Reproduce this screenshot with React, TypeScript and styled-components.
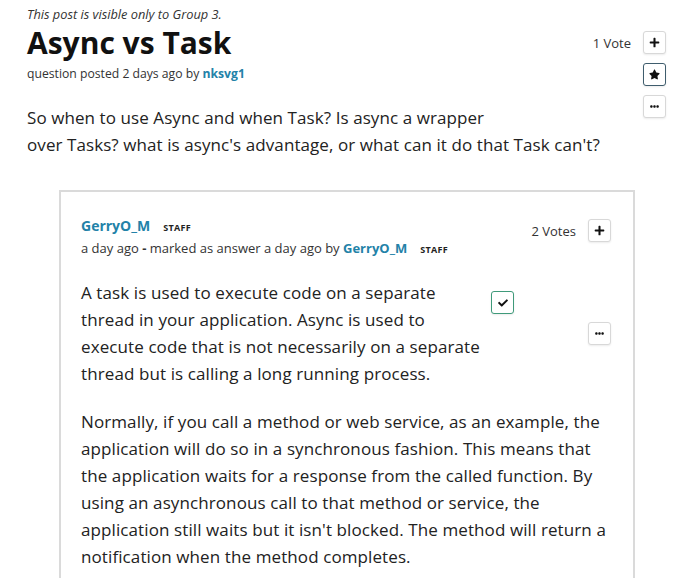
import React from "react";
import styled, { createGlobalStyle } from "styled-components";
import { FaPlus, FaStar, FaEllipsisH, FaCheck } from "react-icons/fa";

const Global = createGlobalStyle`
  html, body { margin: 0; padding: 0; background: #fff; }
  body { font-family: "Open Sans", "Noto Sans", sans-serif; color: #222; }
`;

const Page = styled.div`
  padding: 5px 17px 0 27px;
`;

const Top = styled.header`
  display: flow-root;
`;

const Notice = styled.div`
  font-size: 12.8px;
  line-height: 18px;
  font-style: italic;
  color: #333;
`;

const Title = styled.h1`
  margin: 3px 0 0;
  font-size: 30px;
  line-height: 34px;
  font-weight: 700;
  color: #111;
`;

const Meta = styled.div<{ $top?: number; $size?: number }>`
  font-size: ${(p) => p.$size ?? 13}px;
  line-height: 20px;
  color: #333;
  margin-top: ${(p) => p.$top ?? 0}px;
`;

const Link = styled.span<{ $size?: number }>`
  color: #2382a8;
  font-weight: 700;
  font-size: ${(p) => (p.$size ? `${p.$size}px` : "inherit")};
`;

const Staff = styled.span`
  font-size: 9px;
  font-weight: 700;
  letter-spacing: 0.3px;
  color: #222;
  margin-left: 13px;
`;

const Question = styled.p`
  margin: 20px 0 0;
  font-size: 17px;
  line-height: 27px;
  color: #222;
  letter-spacing: 0.08px;
`;

const Actions = styled.div`
  float: right;
  display: flex;
  flex-direction: column;
  align-items: flex-end;
  gap: 9px;
  padding-top: 26px;
  margin-left: 12px;
`;

const VoteRow = styled.div`
  display: flex;
  align-items: center;
  gap: 12px;
`;

const VoteLabel = styled.span`
  font-size: 13px;
  color: #333;
`;

const IconButton = styled.button<{ $tone?: "plain" | "dark" | "green" }>`
  width: 23px;
  height: 23px;
  padding: 0;
  display: flex;
  align-items: center;
  justify-content: center;
  background: #fff;
  border-radius: 3px;
  border: 1px solid
    ${(p) =>
      p.$tone === "dark" ? "#3f5d6d" : p.$tone === "green" ? "#3f9a7a" : "#d8d8d8"};
  box-shadow: 0 1px 2px rgba(0, 0, 0, 0.08);
  color: #111;
  font-size: 11px;
  cursor: pointer;
`;

const Card = styled.section`
  margin: 32px 31px 0 32px;
  border: 2px solid #dadada;
  border-bottom: none;
  padding: 24px 22px 30px 20px;
`;

const CardHead = styled.div`
  display: flex;
  justify-content: space-between;
  align-items: flex-start;
`;

const AnswerVotes = styled(VoteRow)`
  margin-top: 3px;
`;

const CardBody = styled.div`
  display: flex;
  margin-top: 19px;
`;

const FirstPara = styled.p`
  margin: 0;
  width: 404px;
  font-size: 17px;
  line-height: 27px;
  letter-spacing: 0.1px;
  color: #222;
`;

const CheckSlot = styled.div`
  padding-top: 12px;
  margin-left: 6px;
`;

const SideSlot = styled.div`
  margin-left: auto;
  padding-top: 43px;
`;

const Para = styled.p`
  margin: 21px 0 0;
  font-size: 17px;
  line-height: 27px;
  letter-spacing: 0.1px;
  color: #222;
`;

export default function App() {
  return (
    <>
      <Global />
      <Page>
        <Top>
          <Actions>
            <VoteRow>
              <VoteLabel>1 Vote</VoteLabel>
              <IconButton aria-label="upvote">
                <FaPlus />
              </IconButton>
            </VoteRow>
            <IconButton $tone="dark" aria-label="favorite">
              <FaStar />
            </IconButton>
            <IconButton aria-label="more">
              <FaEllipsisH size={9} />
            </IconButton>
          </Actions>
          <Notice>This post is visible only to Group 3.</Notice>
          <Title>Async vs Task</Title>
          <Meta $top={4} $size={12.2}>
            question posted 2 days ago by <Link>nksvg1</Link>
          </Meta>
          <Question>
            So when to use Async and when Task? Is async a wrapper
            <br />
            over Tasks? what is async's advantage, or what can it do that Task can't?
          </Question>
        </Top>
        <Card>
          <CardHead>
            <div>
              <Meta>
                <Link $size={14}>GerryO_M</Link>
                <Staff>STAFF</Staff>
              </Meta>
              <Meta>
                a day ago <b>-</b> marked as answer a day ago by <Link>GerryO_M</Link>
                <Staff>STAFF</Staff>
              </Meta>
            </div>
            <AnswerVotes>
              <VoteLabel>2 Votes</VoteLabel>
              <IconButton aria-label="upvote">
                <FaPlus />
              </IconButton>
            </AnswerVotes>
          </CardHead>
          <CardBody>
            <FirstPara>
              A task is used to execute code on a separate thread in your application.
              Async is used to execute code that is not necessarily on a separate thread
              but is calling a long running process.
            </FirstPara>
            <CheckSlot>
              <IconButton $tone="green" aria-label="accepted">
                <FaCheck size={10} />
              </IconButton>
            </CheckSlot>
            <SideSlot>
              <IconButton aria-label="more">
                <FaEllipsisH size={9} />
              </IconButton>
            </SideSlot>
          </CardBody>
          <Para>
            Normally, if you call a method or web service, as an example, the application
            will do so in a synchronous fashion. This means that the application waits for
            a response from the called function. By using an asynchronous call to that
            method or service, the application still waits but it isn't blocked. The
            method will return a notification when the method completes.
          </Para>
        </Card>
      </Page>
    </>
  );
}
